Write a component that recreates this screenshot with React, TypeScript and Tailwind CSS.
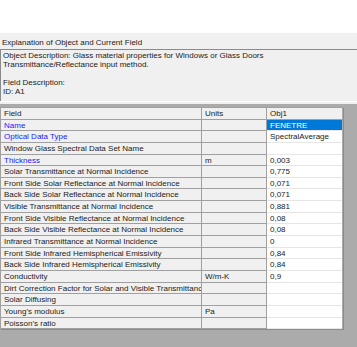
import React from "react";

type Row = { field: string; units?: string; value?: string; required?: boolean; selected?: boolean };

const ROWS: Row[] = [
    { field: "Name", value: "FENETRE", required: true, selected: true },
    { field: "Optical Data Type", value: "SpectralAverage", required: true },
    { field: "Window Glass Spectral Data Set Name" },
    { field: "Thickness", units: "m", value: "0,003", required: true },
    { field: "Solar Transmittance at Normal Incidence", value: "0,775" },
    { field: "Front Side Solar Reflectance at Normal Incidence", value: "0,071" },
    { field: "Back Side Solar Reflectance at Normal Incidence", value: "0,071" },
    { field: "Visible Transmittance at Normal Incidence", value: "0,881" },
    { field: "Front Side Visible Reflectance at Normal Incidence", value: "0,08" },
    { field: "Back Side Visible Reflectance at Normal Incidence", value: "0,08" },
    { field: "Infrared Transmittance at Normal Incidence", value: "0" },
    { field: "Front Side Infrared Hemispherical Emissivity", value: "0,84" },
    { field: "Back Side Infrared Hemispherical Emissivity", value: "0,84" },
    { field: "Conductivity", units: "W/m-K", value: "0,9" },
    { field: "Dirt Correction Factor for Solar and Visible Transmittance" },
    { field: "Solar Diffusing" },
    { field: "Young's modulus", units: "Pa" },
    { field: "Poisson's ratio" },
];

function GridRow({ row }: { row: Row }) {
    return (
        <div className="flex h-[11.65px] leading-[11px]">
            <div
                className={`w-[202px] shrink-0 overflow-hidden whitespace-nowrap border-b border-l border-r border-[#a0a0a0] bg-[#f0f0f0] pl-[3px] ${
                    row.required ? "text-[#1a1aff]" : "text-[#222]"
                }`}
            >
                {row.field}
            </div>
            <div className="w-[65px] shrink-0 overflow-hidden whitespace-nowrap border-b border-r border-[#a0a0a0] bg-[#f0f0f0] pl-[3px]">
                {row.units}
            </div>
            <div
                className={`w-[75px] shrink-0 overflow-hidden whitespace-nowrap border-b border-[#e6e6e6] pl-[3px] ${
                    row.selected ? "bg-[#0078d7] text-white" : "bg-white text-[#222]"
                }`}
            >
                {row.value}
            </div>
        </div>
    );
}

export default function App() {
    return (
        <div className="flex h-[347px] w-[357px] flex-col overflow-hidden bg-white font-['Liberation_Sans',sans-serif] text-[8px] text-[#222]">
            <div className="h-[33px] shrink-0 bg-white" />

            <div className="shrink-0 bg-[#f0f0f0] pt-[5px]">
                <div className="h-[11px] pl-[2px] leading-[10px]">Explanation of Object and Current Field</div>
                <div className="h-[52px] border-l border-t border-[#8a8a8a] pl-[2px] pt-[1px] leading-[9px]">
                    <div>Object Description: Glass material properties for Windows or Glass Doors</div>
                    <div>Transmittance/Reflectance input method.</div>
                    <div className="h-[9px]" />
                    <div>Field Description:</div>
                    <div>ID: A1</div>
                </div>
                <div className="h-[3px] border-t border-[#ffffff]" />
            </div>

            <div className="flex-1 bg-[#ababab] pt-[3px]">
                <div className="w-[343px] border-t border-[#a0a0a0] shadow-[1px_1px_0_#8c8c8c]">
                    <div className="flex h-[11.65px] leading-[11px]">
                        <div className="w-[202px] shrink-0 border-b border-l border-r border-[#a0a0a0] bg-[#f0f0f0] pl-[3px]">Field</div>
                        <div className="w-[65px] shrink-0 border-b border-r border-[#a0a0a0] bg-[#f0f0f0] pl-[3px]">Units</div>
                        <div className="w-[75px] shrink-0 border-b border-[#a0a0a0] bg-[#f0f0f0] pl-[3px]">Obj1</div>
                    </div>
                    {ROWS.map((row) => (
                        <GridRow key={row.field} row={row} />
                    ))}
                </div>
            </div>
        </div>
    );
}
